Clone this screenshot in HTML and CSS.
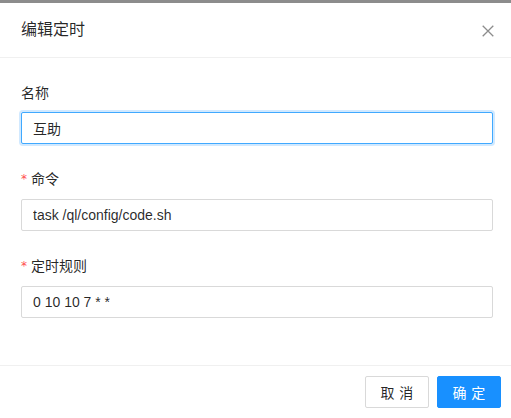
FILE: index.html
```html
<!DOCTYPE html>
<html lang="zh-CN">
<head>
<meta charset="utf-8">
<title>编辑定时</title>
<link rel="stylesheet" href="styles.css">
</head>
<body>
<div class="modal">
  <div class="modal-header">
    <div class="modal-title">编辑定时</div>
    <span class="modal-close" aria-label="关闭">
      <svg width="12" height="12" viewBox="0 0 12 12"><path d="M0.7 0.7 L11.3 11.3 M11.3 0.7 L0.7 11.3" stroke="rgba(0,0,0,0.45)" stroke-width="1.3" fill="none"/></svg>
    </span>
  </div>
  <div class="modal-body">
    <div class="form-item">
      <label class="form-label">名称</label>
      <input class="form-input focused" type="text" value="互助">
    </div>
    <div class="form-item">
      <label class="form-label"><span class="req">*</span>命令</label>
      <input class="form-input" type="text" value="task /ql/config/code.sh">
    </div>
    <div class="form-item">
      <label class="form-label"><span class="req">*</span>定时规则</label>
      <input class="form-input" type="text" value="0 10 10 7 * *">
    </div>
  </div>
  <div class="modal-footer">
    <button class="btn"><span class="two-chars">取消</span></button>
    <button class="btn btn-primary"><span class="two-chars">确定</span></button>
  </div>
</div>
</body>
</html>
```
FILE: styles.css
```css
html, body {
  margin: 0;
  padding: 0;
  height: 100%;
  overflow: hidden;
}
body {
  background: #8c8c8c;
  font-family: "Liberation Sans", "Noto Sans CJK SC", sans-serif;
  font-size: 14px;
  color: rgba(0,0,0,0.85);
}
.modal {
  width: 520px;
  margin: 3px 0 0 -3px;
  background: #fff;
  min-height: 415px;
}
.modal-header {
  display: flex;
  align-items: center;
  justify-content: space-between;
  padding: 16px 23px 16px 24px;
  border-bottom: 1px solid #f0f0f0;
  height: 22px;
}
.modal-title {
  font-size: 16px;
  line-height: 22px;
  color: rgba(0,0,0,0.85);
}
.modal-close {
  display: flex;
  width: 12px;
  height: 12px;
  margin-top: 2px;
}
.modal-body {
  padding: 24px 24px 23px;
}
.form-item {
  display: flex;
  flex-direction: column;
  margin-bottom: 24px;
}
.form-label {
  line-height: 22px;
  padding-bottom: 8px;
  font-size: 14px;
  color: rgba(0,0,0,0.85);
}
.req {
  color: #ff4d4f;
  font-family: "DejaVu Sans", sans-serif;
  font-size: 12px;
  margin-right: 4px;
  position: relative;
  top: -1px;
}
.form-input {
  box-sizing: border-box;
  height: 32px;
  width: 100%;
  padding: 4px 11px;
  border: 1px solid #d9d9d9;
  border-radius: 2px;
  font-family: "Liberation Sans", "Noto Sans CJK SC", sans-serif;
  font-size: 14px;
  color: rgba(0,0,0,0.85);
  background: #fff;
  outline: none;
  margin: 0;
}
.form-input.focused {
  border-color: #40a9ff;
  box-shadow: 0 0 0 2px rgba(24,144,255,0.2);
}
.modal-footer {
  display: flex;
  justify-content: flex-end;
  gap: 8px;
  padding: 10px 16px;
  border-top: 1px solid #f0f0f0;
}
.btn {
  box-sizing: border-box;
  display: flex;
  align-items: center;
  justify-content: center;
  height: 32px;
  width: 64px;
  padding: 0;
  border: 1px solid #d9d9d9;
  border-radius: 2px;
  background: #fff;
  color: rgba(0,0,0,0.85);
  font-family: "Liberation Sans", "Noto Sans CJK SC", sans-serif;
  font-size: 14px;
  white-space: nowrap;
  cursor: pointer;
}
.btn-primary {
  background: #1890ff;
  border-color: #1890ff;
  color: #fff;
}
.two-chars {
  letter-spacing: 0.34em;
  margin-right: -0.34em;
}
```
